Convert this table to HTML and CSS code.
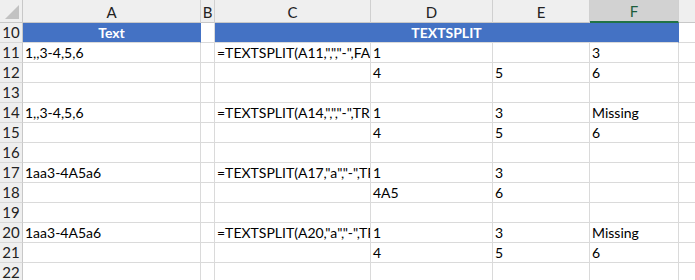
FILE: index.html
```html
<!DOCTYPE html>
<html lang="en">
<head>
    <meta charset="UTF-8">
    <title>TEXTSPLIT</title>
    <link rel="stylesheet" href="styles.css">
</head>
<body>

<div class="sheet">
    <!-- column headers -->
    <div class="corner"><span class="tri"></span></div>
    <div class="col-head">A</div>
    <div class="col-head">B</div>
    <div class="col-head">C</div>
    <div class="col-head">D</div>
    <div class="col-head">E</div>
    <div class="col-head active">F</div>
    <div class="col-head"></div>

    <!-- row 10 -->
    <div class="row-head">10</div>
    <div class="cell title">Text</div>
    <div class="cell"></div>
    <div class="cell title span4">TEXTSPLIT</div>
    <div class="cell"></div>

    <!-- row 11 -->
    <div class="row-head">11</div>
    <div class="cell">1,,3-4,5,6</div>
    <div class="cell"></div>
    <div class="cell">=TEXTSPLIT(A11,",","-",FALSE)</div>
    <div class="cell">1</div>
    <div class="cell"></div>
    <div class="cell">3</div>
    <div class="cell"></div>

    <!-- row 12 -->
    <div class="row-head">12</div>
    <div class="cell"></div>
    <div class="cell"></div>
    <div class="cell"></div>
    <div class="cell">4</div>
    <div class="cell">5</div>
    <div class="cell">6</div>
    <div class="cell"></div>

    <!-- row 13 -->
    <div class="row-head">13</div>
    <div class="cell"></div><div class="cell"></div><div class="cell"></div>
    <div class="cell"></div><div class="cell"></div><div class="cell"></div><div class="cell"></div>

    <!-- row 14 -->
    <div class="row-head">14</div>
    <div class="cell">1,,3-4,5,6</div>
    <div class="cell"></div>
    <div class="cell">=TEXTSPLIT(A14,",","-",TRUE,,"Missing")</div>
    <div class="cell">1</div>
    <div class="cell">3</div>
    <div class="cell">Missing</div>
    <div class="cell"></div>

    <!-- row 15 -->
    <div class="row-head">15</div>
    <div class="cell"></div>
    <div class="cell"></div>
    <div class="cell"></div>
    <div class="cell">4</div>
    <div class="cell">5</div>
    <div class="cell">6</div>
    <div class="cell"></div>

    <!-- row 16 -->
    <div class="row-head">16</div>
    <div class="cell"></div><div class="cell"></div><div class="cell"></div>
    <div class="cell"></div><div class="cell"></div><div class="cell"></div><div class="cell"></div>

    <!-- row 17 -->
    <div class="row-head">17</div>
    <div class="cell">1aa3-4A5a6</div>
    <div class="cell"></div>
    <div class="cell">=TEXTSPLIT(A17,"a","-",TRUE)</div>
    <div class="cell">1</div>
    <div class="cell">3</div>
    <div class="cell"></div>
    <div class="cell"></div>

    <!-- row 18 -->
    <div class="row-head">18</div>
    <div class="cell"></div>
    <div class="cell"></div>
    <div class="cell"></div>
    <div class="cell">4A5</div>
    <div class="cell">6</div>
    <div class="cell"></div>
    <div class="cell"></div>

    <!-- row 19 -->
    <div class="row-head">19</div>
    <div class="cell"></div><div class="cell"></div><div class="cell"></div>
    <div class="cell"></div><div class="cell"></div><div class="cell"></div><div class="cell"></div>

    <!-- row 20 -->
    <div class="row-head">20</div>
    <div class="cell">1aa3-4A5a6</div>
    <div class="cell"></div>
    <div class="cell">=TEXTSPLIT(A20,"a","-",TRUE,,"Missing")</div>
    <div class="cell">1</div>
    <div class="cell">3</div>
    <div class="cell">Missing</div>
    <div class="cell"></div>

    <!-- row 21 -->
    <div class="row-head">21</div>
    <div class="cell"></div>
    <div class="cell"></div>
    <div class="cell"></div>
    <div class="cell">4</div>
    <div class="cell">5</div>
    <div class="cell">6</div>
    <div class="cell"></div>

    <!-- row 22 -->
    <div class="row-head">22</div>
    <div class="cell"></div><div class="cell"></div><div class="cell"></div>
    <div class="cell"></div><div class="cell"></div><div class="cell"></div><div class="cell"></div>
</div>

</body>
</html>
```

FILE: styles.css
```css
body {
    margin: 0;
    padding: 0;
    background: #fff;
    font-family: 'Lato', 'Liberation Sans', sans-serif;
    font-size: 14px;
    color: #000;
    overflow: hidden;
}

.sheet {
    display: grid;
    grid-template-columns: 23px 178px 14px 156px 122px 97px 89px 40px;
    grid-template-rows: 23px repeat(13, 20px);
}

.corner {
    position: relative;
    background: #efefef;
    border-right: 1px solid #c8c8c8;
    border-bottom: 1px solid #c8c8c8;
}

.tri {
    position: absolute;
    right: 3px;
    bottom: 3px;
    width: 0;
    height: 0;
    border-left: 14px solid transparent;
    border-bottom: 14px solid #c2c2c2;
}

.col-head {
    background: #efefef;
    border-right: 1px solid #d0d0d0;
    border-bottom: 1px solid #c8c8c8;
    color: #222;
    font-size: 15px;
    display: flex;
    align-items: flex-end;
    justify-content: center;
    padding-bottom: 1px;
}

.col-head.active {
    background: #d2d2d2;
    color: #1d5e3c;
    border-bottom: 2px solid #217346;
}

.row-head {
    background: #efefef;
    border-right: 1px solid #c8c8c8;
    border-bottom: 1px solid #d8d8d8;
    color: #222;
    font-size: 15px;
    display: flex;
    align-items: flex-end;
    justify-content: center;
    padding-bottom: 1px;
}

.cell {
    border-right: 1px solid #dadada;
    border-bottom: 1px solid #dadada;
    padding: 0 0 1px 2px;
    white-space: nowrap;
    overflow: hidden;
    display: flex;
    align-items: flex-end;
    line-height: 17px;
}

.cell.title {
    background: #4472c4;
    color: #fff;
    font-weight: bold;
    justify-content: center;
    padding-left: 0;
    border-right-color: #4472c4;
}

.span4 {
    grid-column: span 4;
}
```
